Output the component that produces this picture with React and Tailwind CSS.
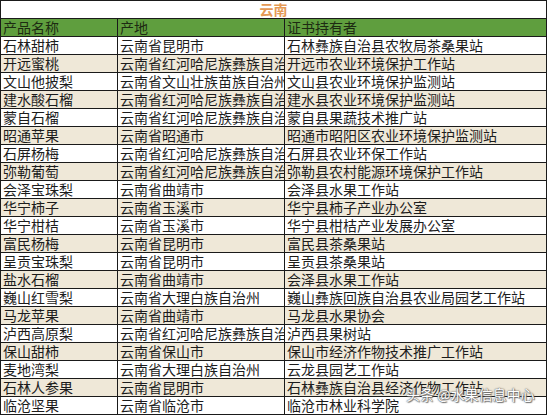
import React from "react";

const rows = [
  ["石林甜柿", "云南省昆明市", "石林彝族自治县农牧局茶桑果站"],
  ["开远蜜桃", "云南省红河哈尼族彝族自治州", "开远市农业环境保护工作站"],
  ["文山他披梨", "云南省文山壮族苗族自治州", "文山县农业环境保护监测站"],
  ["建水酸石榴", "云南省红河哈尼族彝族自治州", "建水县农业环境保护监测站"],
  ["蒙自石榴", "云南省红河哈尼族彝族自治州", "蒙自县果蔬技术推广站"],
  ["昭通苹果", "云南省昭通市", "昭通市昭阳区农业环境保护监测站"],
  ["石屏杨梅", "云南省红河哈尼族彝族自治州", "石屏县农业环保工作站"],
  ["弥勒葡萄", "云南省红河哈尼族彝族自治州", "弥勒县农村能源环境保护工作站"],
  ["会泽宝珠梨", "云南省曲靖市", "会泽县水果工作站"],
  ["华宁柿子", "云南省玉溪市", "华宁县柿子产业办公室"],
  ["华宁柑桔", "云南省玉溪市", "华宁县柑桔产业发展办公室"],
  ["富民杨梅", "云南省昆明市", "富民县茶桑果站"],
  ["呈贡宝珠梨", "云南省昆明市", "呈贡县茶桑果站"],
  ["盐水石榴", "云南省曲靖市", "会泽县水果工作站"],
  ["巍山红雪梨", "云南省大理白族自治州", "巍山彝族回族自治县农业局园艺工作站"],
  ["马龙苹果", "云南省曲靖市", "马龙县水果协会"],
  ["泸西高原梨", "云南省红河哈尼族彝族自治州", "泸西县果树站"],
  ["保山甜柿", "云南省保山市", "保山市经济作物技术推广工作站"],
  ["麦地湾梨", "云南省大理白族自治州", "云龙县园艺工作站"],
  ["石林人参果", "云南省昆明市", "石林彝族自治县经济作物工作站"],
  ["临沧坚果", "云南省临沧市", "临沧市林业科学院"],
];

const font = { fontFamily: '"Noto Sans CJK SC", "Noto Sans", sans-serif' };

function Row({ cells, bg }) {
  return (
    <div className={`flex h-[18px] border-b border-[#1a1a1a] ${bg}`}>
      <div className="w-[117px] shrink-0 overflow-hidden whitespace-nowrap border-r border-[#1a1a1a] pl-[2px] text-[14px] leading-[17px]">{cells[0]}</div>
      <div className="w-[167px] shrink-0 overflow-hidden whitespace-nowrap border-r border-[#1a1a1a] pl-[2px] text-[14px] leading-[17px]">{cells[1]}</div>
      <div className="w-[262px] shrink-0 overflow-hidden whitespace-nowrap border-r border-[#1a1a1a] pl-[2px] text-[14px] leading-[17px]">{cells[2]}</div>
    </div>
  );
}

export default function App() {
  return (
    <div className="relative w-[548px] h-[415px] bg-white overflow-hidden" style={font}>
      <div className="w-[547px] border-t border-l border-[#1a1a1a] text-[#1c1c1c]">
        <div className="flex h-[18px] items-center justify-center border-b border-r border-[#1a1a1a]">
          <span className="text-[14px] font-bold leading-[17px] text-[#e59a55]">云南</span>
        </div>
        <Row cells={["产品名称", "产地", "证书持有者"]} bg="bg-[#5f9e3e] text-[#1d2b12]" />
        {rows.map((r, i) => (
          <Row key={i} cells={r} bg={i % 2 === 0 ? "bg-white" : "bg-[#efe8d8]"} />
        ))}
      </div>
      <div
        className="absolute left-[406px] top-[386px] whitespace-nowrap text-[14px] leading-[17px] text-white"
        style={{ textShadow: "0 0 1px #555, 0 0 2px #666, 1px 1px 1px #777" }}
      >
        头条 @水果信息中心
      </div>
    </div>
  );
}
